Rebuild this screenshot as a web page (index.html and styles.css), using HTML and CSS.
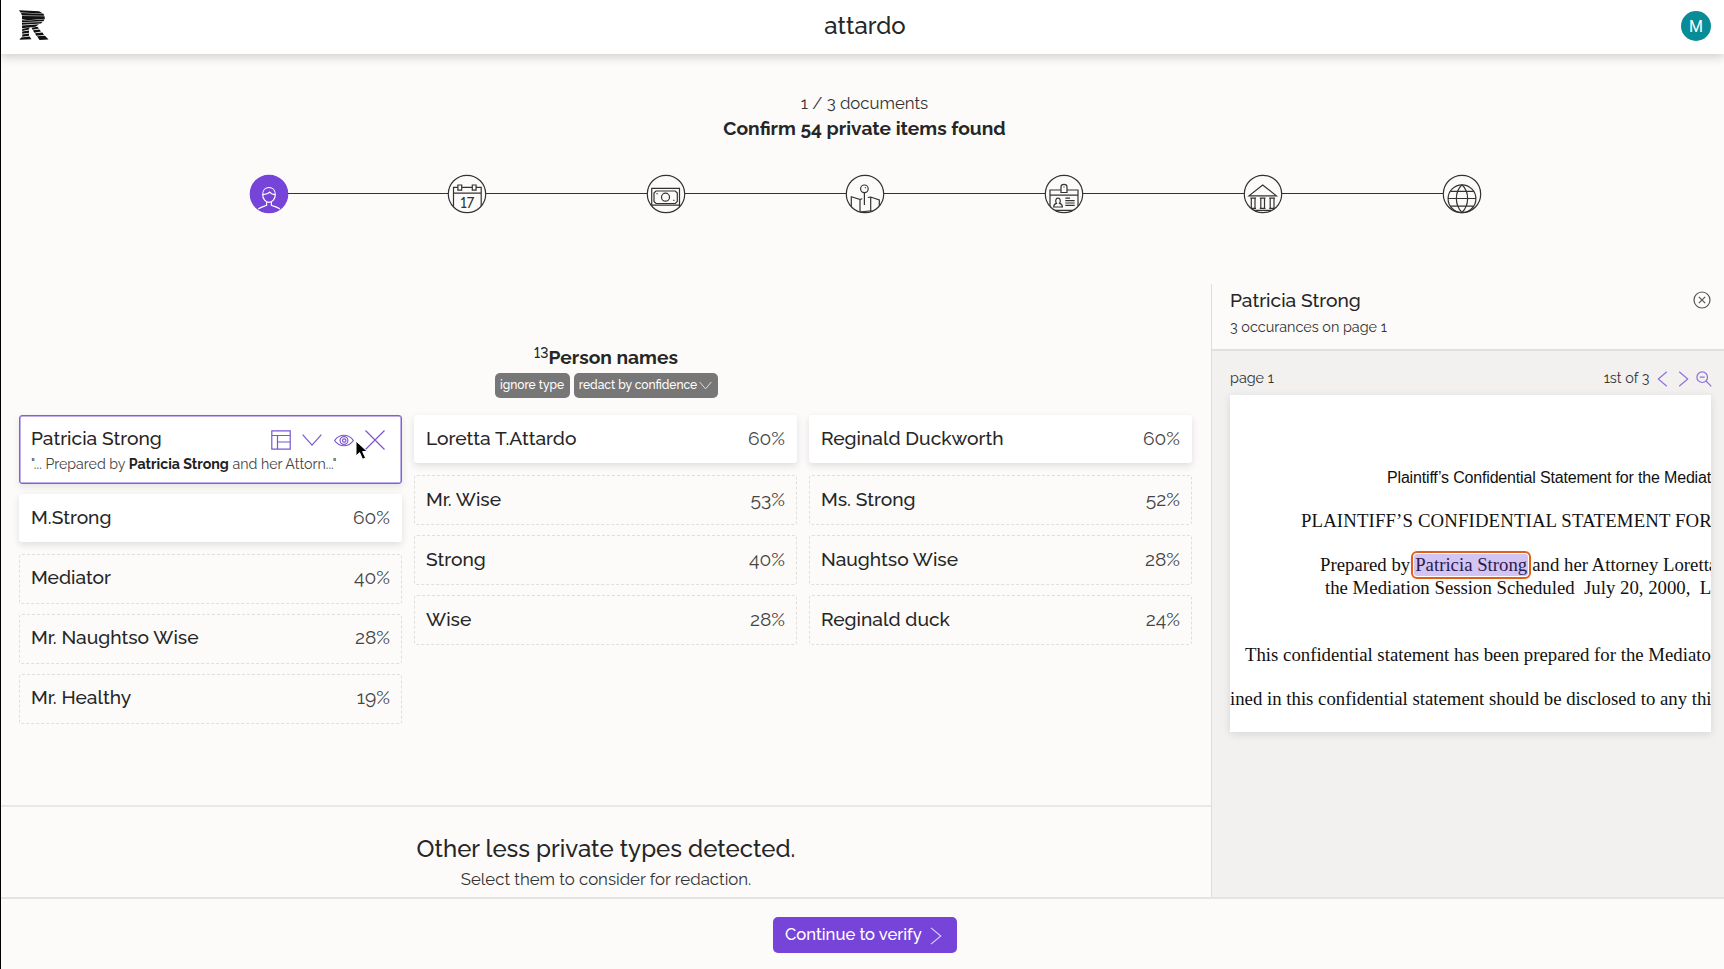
FILE: index.html
```
<!DOCTYPE html>
<html lang="en">
<head>
<meta charset="utf-8">
<title>attardo</title>
<link rel="stylesheet" href="styles.css">
</head>
<body>
<header class="topbar">
  <svg class="logo" viewBox="0 0 30 31" width="30" height="31">
    <g fill="#111">
      <path d="M0 .3 20 1.2 24 3.4 1.500 2.600z"/>
      <path d="M2 3 24.500 3.800 25.300 5.800 3 5.400z"/>
      <path d="M3 6 25.500 6.300 26 8.800 9 10.200 3 9.200z"/>
      <path d="M3 10.300 10 10.500 25.500 9.200 24.500 11.200 3 12.200z"/>
      <path d="M3 12.700 23.500 12 22 13.600 3 14.700z"/>
      <path d="M3 15.400 20 14.300 16.500 16.800 3 18.200z"/>
      <path d="M3.200 18.900 10.500 17.500 10 19.400 3.200 20.900z"/>
      <path d="M12.500 17.700 18.500 16.700 20 18.500 13.500 19.700z"/>
      <path d="M3.200 21.500 10 20.600 10 22.700 3.200 23.700z"/>
      <path d="M14 20.300 20.500 19.400 22 21.600 15.300 22.700z"/>
      <path d="M3.200 24.400 10 23.600 10 25.700 3.200 26.700z"/>
      <path d="M16 23.300 23.500 22.400 25 25 17.200 25.800z"/>
      <path d="M2 27.400 10.500 26.600 12.500 29.300.500 29.800z"/>
      <path d="M18 26.300 26 25.700 29.500 29.500 20.500 29.900z"/>
    </g>
  </svg>
  <h1 class="brand">attardo</h1>
  <div class="avatar">M</div>
</header>

<section class="progress">
  <p class="count">1 / 3 documents</p>
  <p class="confirm">Confirm 54 private items found</p>
  <div class="steps">
    <svg class="step active" viewBox="0 0 40 40"><circle class="ring" cx="20" cy="20" r="18.700"/><path d="M13.700 20.500C13.700 16 16.500 13.500 20 13.500S26.300 16 26.300 20.500C26.300 25 23.300 28.300 20 28.300S13.700 25 13.700 20.500M14 20.500C17 20.300 19.500 19.500 20.700 18.200 22 19.800 24 20.600 26 20.700M17.600 28V31.300C15 32.500 12 33 9.300 35M22.400 28V31.300C25 32.500 28 33 31 35"/></svg>
    <i class="rail"></i>
    <svg class="step" viewBox="0 0 40 40"><g clip-path="url(#disc)"><path d="M6.500 40V13.300H10.800M14.800 13.300H25.200M29.200 13.300H34.200V40M6.500 19.200H34.200M10.900 11H14.700V16.200H10.900zM25.300 11H29.100V16.200H25.300z"/><text class="day" x="20.300" y="34.300">17</text></g><circle class="ring" cx="20" cy="20" r="18.700"/></svg>
    <i class="rail"></i>
    <svg class="step" viewBox="0 0 40 40"><g clip-path="url(#disc)"><path d="M5.700 38V14.300H33.500V38M5.700 31.200H33.500M10 17H29.300L31.300 19V27.500L29.300 29.500H10L8 27.500V19z"/><circle cx="19.500" cy="23.200" r="4"/><path d="M10.500 19.700H11.700M27.200 26.300H28.400"/></g><circle class="ring" cx="20" cy="20" r="18.700"/></svg>
    <i class="rail"></i>
    <svg class="step" viewBox="0 0 40 40"><g clip-path="url(#disc)"><circle cx="19.400" cy="14.800" r="3.800"/><path d="M19.400 18.600V31M20 13.300 20.800 14.200M6.300 34V22.700L15 25.500V38M15 25.500 17.300 24.800M22.800 23.500 25.700 23 34.300 26V34M25.700 23V36.800L15 38M25.700 36.800 29 38"/></g><circle class="ring" cx="20" cy="20" r="18.700"/></svg>
    <i class="rail"></i>
    <svg class="step" viewBox="0 0 40 40"><g clip-path="url(#disc)"><path d="M17 16H6V36.300H34V16H23M6 21.200H34M17 18.500V13Q17 10.400 20 10.400T23 13V18.500zM20 12.600V13.600M9.700 33Q9.700 30 12.500 29.300C11.200 27.500 11.400 24.200 14 24.200S16.800 27.500 15.500 29.300Q18.400 30 18.400 33zM21.300 24.200H26M21.300 26.600H30.700M21.300 29H30.700M21.300 31.400H30.700"/></g><circle class="ring" cx="20" cy="20" r="18.700"/></svg>
    <i class="rail"></i>
    <svg class="step" viewBox="0 0 40 40"><g clip-path="url(#disc)"><path d="M19.700 11 6 21.800H33.400zM7.300 24.200H13M7.300 34.300H13M8.300 24.200V34.300M12 24.200V34.300M16.800 24.200H22.500M16.800 34.300H22.500M17.800 24.200V34.300M21.500 24.200V34.300M26.200 24.200H32M26.200 34.300H32M27.200 24.200V34.300M31 24.200V34.300M6 36.400H34"/></g><circle class="ring" cx="20" cy="20" r="18.700"/></svg>
    <i class="rail"></i>
    <svg class="step" viewBox="0 0 40 40"><circle cx="20" cy="24.700" r="13.900"/><path d="M20 10.800C12.500 18 12.500 31 20 38.500M20 10.800C27.500 18 27.500 31 20 38.500M8.300 17.300H31.700M6 24.500H34M8.500 32.200H31.500"/><circle class="ring" cx="20" cy="20" r="18.700"/></svg>
  </div>
  <svg width="0" height="0" class="defs"><clipPath id="disc"><circle cx="20" cy="20" r="18.700"/></clipPath></svg>
</section>

<main class="work">
  <div class="left">
    <section class="group">
      <h2 class="group-title"><span class="num">13</span>Person names</h2>
      <div class="chips">
        <button class="chip ignore">ignore type</button>
        <button class="chip redact">redact by confidence<svg width="13" height="9" viewBox="0 0 13 9"><path d="M.7 1 6.500 7.800 12.300 1"/></svg></button>
      </div>
      <div class="columns">
        <div class="column">
          <article class="card selected">
            <div class="row"><span class="name">Patricia Strong</span>
              <span class="tools">
                <svg width="20" height="20" viewBox="0 0 20 20"><path d="M.8.8H19.200V19.200H.8zM.8 5.500H19.200M6.500 5.500V19.200M6.500 12H19.200"/></svg>
                <svg width="20" height="20" viewBox="0 0 20 20"><path d="M.6 4.600 10 15.200 19.400 4.600"/></svg>
                <svg width="20" height="20" viewBox="0 0 20 20"><path d="M.6 10.500C5.500 3.500 14.500 3.500 19.400 10.500 14.500 17.500 5.500 17.500.6 10.500z"/><circle cx="10" cy="10.500" r="3.900"/><circle cx="10.200" cy="10.500" r="1.700"/></svg>
                <svg width="20" height="20" viewBox="0 0 20 20"><path d="M.5.5 19.500 19.500M19.500.5.5 19.500"/></svg>
              </span>
            </div>
            <p class="snippet">"... Prepared by <b>Patricia Strong</b> and her Attorn..."</p>
            <svg class="cursor" width="14" height="22" viewBox="0 0 14 22"><path d="M1 1V16L4.600 12.600 7.600 19.300 10.600 18 7.600 11.500H12.300z"/></svg>
          </article>
          <article class="card solid"><span class="name">M.Strong</span><span class="pct">60%</span></article>
          <article class="card"><span class="name">Mediator</span><span class="pct">40%</span></article>
          <article class="card"><span class="name">Mr. Naughtso Wise</span><span class="pct">28%</span></article>
          <article class="card"><span class="name">Mr. Healthy</span><span class="pct">19%</span></article>
        </div>
        <div class="column">
          <article class="card solid"><span class="name">Loretta T.Attardo</span><span class="pct">60%</span></article>
          <article class="card"><span class="name">Mr. Wise</span><span class="pct">53%</span></article>
          <article class="card"><span class="name">Strong</span><span class="pct">40%</span></article>
          <article class="card"><span class="name">Wise</span><span class="pct">28%</span></article>
        </div>
        <div class="column">
          <article class="card solid"><span class="name">Reginald Duckworth</span><span class="pct">60%</span></article>
          <article class="card"><span class="name">Ms. Strong</span><span class="pct">52%</span></article>
          <article class="card"><span class="name">Naughtso Wise</span><span class="pct">28%</span></article>
          <article class="card"><span class="name">Reginald duck</span><span class="pct">24%</span></article>
        </div>
      </div>
    </section>
    <section class="others">
      <h2 class="others-title">Other less private types detected.</h2>
      <p class="others-sub">Select them to consider for redaction.</p>
    </section>
  </div>

  <aside class="panel">
    <div class="panel-head">
      <div>
        <h3 class="panel-title">Patricia Strong</h3>
        <p class="panel-sub">3 occurances on page 1</p>
      </div>
      <svg class="close" width="18" height="18" viewBox="0 0 18 18"><circle cx="9" cy="9" r="8"/><path d="M5.800 5.800 12.200 12.200M12.200 5.800 5.800 12.200"/></svg>
    </div>
    <div class="pager">
      <span class="page">page 1</span>
      <span class="nth">1st of 3</span>
      <svg class="prev" width="11" height="16" viewBox="0 0 11 16"><path d="M9.800.8 1.300 8 9.800 15.200"/></svg>
      <svg class="next" width="11" height="16" viewBox="0 0 11 16"><path d="M1.200.8 9.700 8 1.200 15.200"/></svg>
      <svg class="zoom" width="16" height="16" viewBox="0 0 16 16"><circle cx="6.200" cy="6.200" r="5.300"/><path d="M10 10 15.300 15.300M3.700 6.200H8.700"/></svg>
    </div>
    <div class="sheet">
      <p class="line l1">Plaintiff’s Confidential Statement for the Mediat</p>
      <p class="line l2">PLAINTIFF’S CONFIDENTIAL STATEMENT FOR</p>
      <p class="line l3"><span>Prepared by</span><mark>Patricia Strong</mark><span>and her Attorney Loretta</span></p>
      <p class="line l4">the Mediation Session Scheduled&nbsp; July 20, 2000,&nbsp; L</p>
      <p class="line l5">This confidential statement has been prepared for the Mediato</p>
      <p class="line l6">ined in this confidential statement should be disclosed to any thi</p>
    </div>
  </aside>
</main>

<footer class="actions">
  <button class="continue"><span>Continue to verify</span><svg width="12" height="18" viewBox="0 0 12 18"><path d="M1 .8 10.800 9 1 17.200"/></svg></button>
</footer>
</body>
</html>
```
FILE: styles.css
```
* { box-sizing: border-box; margin: 0; padding: 0; }
body {
  width: 1724px; height: 969px; overflow: hidden;
  display: flex; flex-direction: column;
  background: #fcfbf9; color: #262626;
  border-left: 1px solid #000;
  font-family: Raleway, Lato, sans-serif;
  font-variant-numeric: oldstyle-nums;
  font-size: 19.2px;
}
button { border: 0; font: inherit; }
svg { fill: none; flex: none; }
p, h1, h2, h3, span, button { white-space: nowrap; }

.topbar {
  height: 54px; flex: none; background: #fff; position: relative;
  display: grid; grid-template-columns: 1fr auto 1fr; align-items: center;
  padding: 0 13px 3px 18px;
  box-shadow: 0 3px 9px rgba(40, 30, 30, .2);
}
.brand { font-size: 24px; font-weight: 500; line-height: 30px; }
.avatar {
  justify-self: end; width: 30px; height: 30px; border-radius: 50%;
  background: #078c98; color: #fff; font: 16px/31px Roboto, sans-serif; text-align: center;
}

.progress { height: 230px; flex: none; padding-top: 37px; text-align: center; padding-left: 4px; }
.count { font-size: 16.8px; line-height: 24px; color: #333; }
.confirm { font-size: 19.2px; line-height: 26px; font-weight: 700; }
.steps { display: flex; align-items: center; height: 40px; padding: 0 242px 0 243.500px; margin-top: 32.500px; }
.step { width: 40px; height: 40px; stroke: #333; stroke-width: 1.200; }
.rail { flex: 1; height: 1.200px; background: #333; margin: 0 -1px; }
.day { font-size: 14px; font-weight: 500; fill: #333; stroke: none; text-anchor: middle; font-variant-numeric: lining-nums; }
.active { stroke: #fff; }
.active .ring { fill: #7644d9; stroke: #7644d9; }
.defs { position: absolute; }

.work { display: flex; height: 613px; flex: none; }
.left { width: 1210px; flex: none; display: flex; flex-direction: column; }
.group { height: 521px; padding-top: 60px; }
.group-title { height: 26px; line-height: 26px; font-size: 19.2px; font-weight: 700; text-align: center; }
.num { font-size: 14px; font-weight: 500; vertical-align: 6px; line-height: 1; font-variant-numeric: lining-nums; }
.chips { display: flex; gap: 4px; justify-content: center; margin-top: 3px; }
.chip {
  height: 25px; border-radius: 5px; background: #777; color: #fff;
  font-size: 12px; font-weight: 500; display: flex; align-items: center; justify-content: center; padding-bottom: 2px;
}
.ignore { width: 75px; }
.redact { width: 144px; gap: 2px; }
.chip svg { stroke: #ddd; stroke-width: 1; margin-top: 2px; }
.columns { display: grid; grid-template-columns: repeat(3, 383px); gap: 12px; padding: 17px 0 0 18px; align-items: start; }
.column { display: flex; flex-direction: column; gap: 10px; }
.card {
  height: 50px; padding: 0 11px 3px 11px; border: 1px dashed #e0dfdd; border-radius: 3px;
  display: flex; align-items: center; justify-content: space-between;
}
.solid { height: 48px; margin-bottom: 2px; background: #fff; box-shadow: 0 3px 7px rgba(40, 30, 70, .13); border: 0; padding: 0 12px 2px; }
.selected {
  height: 68.500px; display: block; position: relative; background: #fff;
  border: 1.500px solid #8160d2; padding: 9px 16px 0 11px; box-shadow: 0 3px 7px rgba(40, 30, 70, .1), inset 0 0 0 .5px #8160d2;
}
.row { display: flex; justify-content: space-between; align-items: center; height: 26px; }
.name { font-weight: 500; }
.pct { color: #444; }
.tools { display: flex; gap: 11.500px; padding-top: 4px; }
.tools svg { stroke: #7b57d0; stroke-width: 1.200; }
.snippet { font-size: 14.2px; line-height: 26px; color: #444; }
.snippet b { color: #222; }
.cursor { position: absolute; left: 335px; top: 24px; fill: #000; stroke: #fff; stroke-width: 1; }

.others { flex: 1; border-top: 2px solid #e9e8e6; text-align: center; padding-top: 26px; }
.others-title { font-size: 24px; font-weight: 500; line-height: 32px; }
.others-sub { font-size: 16.8px; line-height: 28px; color: #333; }

.panel { flex: 1; border-left: 1.500px solid #dfdddd; background: #f2f1f0; }
.panel-head {
  height: 67px; background: #fcfbf9; border-bottom: 2px solid #e1dfdf;
  display: flex; justify-content: space-between; align-items: flex-start; padding: 3px 13px 0 18px;
}
.panel-title { font-size: 19.2px; font-weight: 500; line-height: 26px; }
.panel-sub { font-size: 14.4px; line-height: 27px; color: #333; }
.close { stroke: #555; stroke-width: 1.200; margin-top: 4px; }
.pager { display: flex; align-items: center; height: 44px; padding: 9px 12px 0 18px; font-size: 14.4px; color: #333; }
.nth { margin-left: auto; margin-right: 7.500px; }
.pager svg { stroke: #8d70dc; stroke-width: 1.200; margin-top: 3px; }
.next { margin-left: 9.500px; }
.zoom { margin-left: 7.500px; }
.sheet {
  width: 481px; height: 337px; margin-left: 18px; background: #fff; overflow: hidden;
  box-shadow: 0 2px 8px rgba(40, 30, 60, .13); font: 18.78px/22px "Liberation Serif", serif; color: #111;
  font-variant-numeric: lining-nums; padding-top: 72px;
}
.line { height: 22px; }
.l1 { font: 16px/22px "Liberation Sans", sans-serif; padding-left: 157px; letter-spacing: -.17px; }
.l2 { margin-top: 21px; padding-left: 71px; letter-spacing: .14px; }
.l3 { margin-top: 22px; padding-left: 90px; display: flex; }
.l3 mark { outline: 2px solid #e0601a; outline-offset: 1px; background: #d3c5f3; color: #2c1a4d; border-radius: 3px; margin: 0 4px; padding: 0 1px; }
.l4 { margin-top: 1px; padding-left: 95px; }
.l5 { margin-top: 45px; padding-left: 15px; }
.l6 { margin-top: 22px; }

.actions { flex: 1; border-top: 2px solid #e6e4e3; padding: 18px 0 0 772px; }
.continue {
  width: 184px; height: 36px; border-radius: 5px; background: #7644d9; color: #fff;
  font-size: 16.6px; font-weight: 500; display: flex; align-items: center; justify-content: space-between; padding: 0 15px 2px 12px;
}
.continue svg { stroke: #ddd0ff; stroke-width: 1.100; margin-top: 3px; }
```
